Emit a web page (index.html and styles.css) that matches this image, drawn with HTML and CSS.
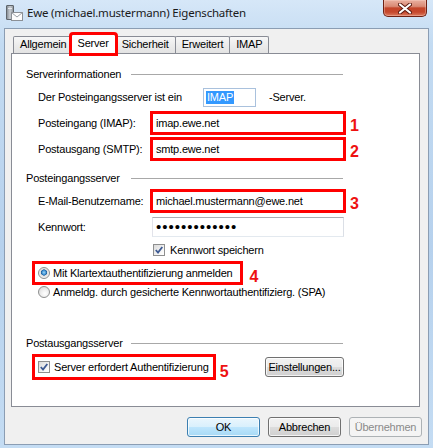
FILE: index.html
```html
<!DOCTYPE html>
<html lang="de">
<head>
  <meta charset="UTF-8" />
  <title>Ewe (michael.mustermann) Eigenschaften</title>
  <link rel="stylesheet" href="styles.css">
</head>
<body>
  <div class="window">

    <!-- Titelleiste -->
    <div class="titlebar">
      <svg class="app-icon" viewBox="0 0 18 17" width="18" height="17">
        <defs>
          <linearGradient id="tower" x1="0" y1="0" x2="1" y2="0">
            <stop offset="0" stop-color="#7d848b" />
            <stop offset="0.5" stop-color="#c9ced3" />
            <stop offset="1" stop-color="#8c9298" />
          </linearGradient>
        </defs>
        <rect x="1.5" y="0.5" width="7" height="14" rx="0.5" fill="url(#tower)" stroke="#5f656b" />
        <rect x="3" y="3" width="4" height="1" fill="#e8eaec" />
        <rect x="6.5" y="7.5" width="11" height="8" fill="#fdfdfd" stroke="#8b9096" />
        <path d="M6.5 7.5 L12 12 L17.5 7.5" fill="none" stroke="#9aa0a6" />
      </svg>
      <span class="title">Ewe (michael.mustermann) Eigenschaften</span>
      <div class="close-btn">
        <svg viewBox="0 0 14 11" width="14" height="11">
          <path d="M2 1.5 L12 9.5 M12 1.5 L2 9.5" stroke="#5b1a10" stroke-width="4" stroke-linecap="round" />
          <path d="M2 1.5 L12 9.5 M12 1.5 L2 9.5" stroke="#ffffff" stroke-width="2.2" stroke-linecap="round" />
        </svg>
      </div>
    </div>

    <!-- Fensterinhalt -->
    <div class="client">
      <div class="tabs">
        <div class="tab">Allgemein</div>
        <div class="tab active">Server</div>
        <div class="tab">Sicherheit</div>
        <div class="tab">Erweitert</div>
        <div class="tab">IMAP</div>
      </div>

      <div class="panel">
        <div class="group-title"><span>Serverinformationen</span><i class="rule"></i></div>

        <div class="row">
          <span class="type-label">Der Posteingangsserver ist ein</span>
          <span class="type-box"><span class="sel">IMAP</span></span>
          <span class="type-suffix">-Server.</span>
        </div>
        <div class="row">
          <span class="label">Posteingang (IMAP):</span>
          <span class="field marked">imap.ewe.net</span>
          <span class="num">1</span>
        </div>
        <div class="row">
          <span class="label">Postausgang (SMTP):</span>
          <span class="field marked">smtp.ewe.net</span>
          <span class="num">2</span>
        </div>

        <div class="group-title second"><span>Posteingangsserver</span><i class="rule"></i></div>

        <div class="row">
          <span class="label">E-Mail-Benutzername:</span>
          <span class="field marked">michael.mustermann@ewe.net</span>
          <span class="num">3</span>
        </div>
        <div class="row">
          <span class="label">Kennwort:</span>
          <span class="field password">•••••••••••••</span>
        </div>
        <div class="row row-remember">
          <span class="checkbox checked"><svg viewBox="0 0 10 10" width="10" height="10"><path d="M1.8 5 L4 7.5 L8.3 2" fill="none" stroke="#3d5a93" stroke-width="1.8" /></svg></span>
          <span class="option-text">Kennwort speichern</span>
        </div>
        <div class="row row-radio">
          <span class="option marked">
            <span class="radio checked"></span>
            <span class="option-text">Mit Klartextauthentifizierung anmelden</span>
          </span>
          <span class="num num-low">4</span>
        </div>
        <div class="row row-radio second">
          <span class="option">
            <span class="radio"></span>
            <span class="option-text">Anmeldg. durch gesicherte Kennwortauthentifizierg. (SPA)</span>
          </span>
        </div>

        <div class="group-title third"><span>Postausgangsserver</span><i class="rule"></i></div>

        <div class="row row-auth">
          <span class="option marked">
            <span class="checkbox checked"><svg viewBox="0 0 10 10" width="10" height="10"><path d="M1.8 5 L4 7.5 L8.3 2" fill="none" stroke="#3d5a93" stroke-width="1.8" /></svg></span>
            <span class="option-text">Server erfordert Authentifizierung</span>
          </span>
          <span class="num num-lower">5</span>
          <button class="btn btn-settings">Einstellungen...</button>
        </div>
      </div>

      <div class="actions">
        <button class="btn btn-default">OK</button>
        <button class="btn">Abbrechen</button>
        <button class="btn btn-disabled">Übernehmen</button>
      </div>
    </div>
  </div>
</body>
</html>
```

FILE: styles.css
```css
* { box-sizing: border-box; }

html, body {
  margin: 0;
  padding: 0;
  width: 433px;
  height: 448px;
  overflow: hidden;
  font-family: 'Liberation Sans', Arial, sans-serif;
  font-size: 11px;
  letter-spacing: -0.2px;
  color: #000;
}

.window {
  height: 448px;
  display: flex;
  flex-direction: column;
  background: linear-gradient(180deg, #d6e7f8 0%, #c3dbf2 10%, #b6d1ed 55%, #c4dcf3 100%);
}

/* Titelleiste */
.titlebar {
  height: 28px;
  flex-shrink: 0;
  display: flex;
  align-items: flex-start;
}

.app-icon {
  margin: 5px 0 0 5px;
}

.title {
  margin: 5px 0 0 4px;
  font-family: 'Noto Sans', 'Open Sans', sans-serif;
  font-size: 11.5px;
  color: #1a1a1a;
}

.close-btn {
  margin-left: auto;
  margin-right: 6px;
  width: 44px;
  height: 17px;
  display: flex;
  align-items: center;
  justify-content: center;
  border: 1px solid #6e2114;
  border-top: none;
  border-radius: 0 0 5px 5px;
  background: linear-gradient(180deg, #eab0a0 0%, #d98a75 40%, #c4452a 50%, #c5472c 75%, #dc7b5f 100%);
  box-shadow: inset 0 0 0 1px rgba(255, 220, 210, 0.35);
}

/* Fensterinhalt */
.client {
  flex: 1;
  margin: 0 4px 3px;
  padding: 4px 8px 0 6px;
  background: #f0f0f0;
  border: 1px solid #8b9db3;
}

.tabs {
  display: flex;
  align-items: flex-end;
  height: 20px;
  margin-left: 2px;
}

.tab {
  height: 17px;
  padding: 0 6px;
  line-height: 15px;
  border: 1px solid #898c95;
  border-bottom: none;
  border-radius: 2px 2px 0 0;
  margin-right: -1px;
  background: linear-gradient(180deg, #f7f7f7 0%, #ececec 50%, #e3e3e3 100%);
}

.tab.active {
  position: relative;
  z-index: 1;
  height: 20px;
  line-height: 17px;
  margin: 0 -1px -1px -2px;
  padding: 0 6px;
  background: #fff;
  outline: 3px solid #f00;
  outline-offset: -1px;
}

.panel {
  height: 354px;
  padding: 13px 0 0 14px;
  background: #fff;
  border: 1px solid #898c95;
}

/* Gruppen */
.group-title {
  display: flex;
  align-items: center;
  height: 14px;
}

.group-title span {
  width: 105px;
}

.group-title .rule {
  width: 212px;
  height: 1px;
  background: #a8a8a8;
}

.group-title.second { margin-top: 12px; }
.group-title.third { margin-top: 36px; }

.row {
  display: flex;
  align-items: center;
  height: 20px;
  margin-top: 6px;
  padding-left: 12px;
}

.label {
  width: 114px;
}

.type-label {
  width: 165px;
}

.type-box {
  width: 53px;
  height: 19px;
  padding: 2px;
  display: flex;
  align-items: center;
  border: 1px solid #a9c1dd;
  background: #fff;
}

.sel {
  background: #3399ff;
  color: #fff;
  line-height: 13px;
  padding: 0 1px;
}

.type-suffix {
  margin-left: 13px;
}

.field {
  width: 192px;
  height: 20px;
  padding-left: 3px;
  line-height: 18px;
  background: #fff;
  border: 1px solid;
  border-color: #abadb3 #dbdfe6 #e3e9ef #e2e3ea;
}

.field.password {
  padding-left: 3px;
  font-size: 15px;
  letter-spacing: 1px;
}

.marked {
  outline: 3px solid #f00;
  outline-offset: -1px;
}

.num {
  margin: 6px 0 0 6px;
  font-size: 16px;
  font-weight: bold;
  letter-spacing: 0;
  color: #ee1111;
}

.num-low { margin: 8px 0 0 9px; }
.num-lower { margin: 10px 0 0 6px; }

/* Optionen */
.checkbox {
  width: 12px;
  height: 12px;
  display: flex;
  align-items: center;
  justify-content: center;
  border: 1px solid #8e8f8f;
  background: linear-gradient(135deg, #dadada 0%, #f6f6f6 70%, #ffffff 100%);
}

.radio {
  width: 12px;
  height: 12px;
  border-radius: 50%;
  border: 1px solid #8e8f8f;
  background: radial-gradient(circle at 60% 65%, #ffffff 0%, #f0f0f0 40%, #d2d2d2 100%);
}

.radio.checked {
  background: radial-gradient(circle at 50% 45%, #9fd8f8 0%, #3d8ed0 28%, #1d5b97 38%, #dcdcdc 45%, #f4f4f4 70%, #d8d8d8 100%);
}

.row-remember {
  height: 16px;
  margin-top: 5px;
  padding-left: 127px;
}

.row-remember .option-text {
  margin-left: 5px;
}

.option {
  display: flex;
  align-items: center;
  height: 20px;
  padding: 0 8px 0 4px;
}

.option .option-text {
  margin-left: 3px;
}

.row-radio {
  margin-top: 5px;
  padding-left: 8px;
}

.row-radio.second {
  height: 16px;
  margin-top: 1px;
}

.row-auth {
  width: 318px;
  height: 22px;
  padding-left: 8px;
}

.row-auth .option {
  height: 22px;
  padding-right: 5px;
}

.row-auth .option-text {
  margin-left: 4px;
}

/* Schaltflächen */
.btn {
  width: 73px;
  height: 20px;
  padding: 0;
  font-family: inherit;
  font-size: 11px;
  letter-spacing: -0.2px;
  color: #000;
  border: 1px solid #707070;
  border-radius: 3px;
  background: linear-gradient(180deg, #f2f2f2 0%, #ebebeb 49%, #dddddd 50%, #cfcfcf 100%);
  box-shadow: inset 0 0 0 1px rgba(255, 255, 255, 0.75);
}

.btn-settings {
  width: 79px;
  margin-left: auto;
}

.btn-default {
  border-color: #3c7fb1;
  background: linear-gradient(180deg, #eaf6fd 0%, #d9f0fc 49%, #bee6fd 50%, #a7d9f5 100%);
}

.btn-disabled {
  color: #8a8a8a;
  border-color: #adb2b5;
  background: #f4f4f4;
  box-shadow: none;
}

.actions {
  display: flex;
  justify-content: flex-end;
  gap: 8px;
  margin: 10px -2px 0 0;
}
```
